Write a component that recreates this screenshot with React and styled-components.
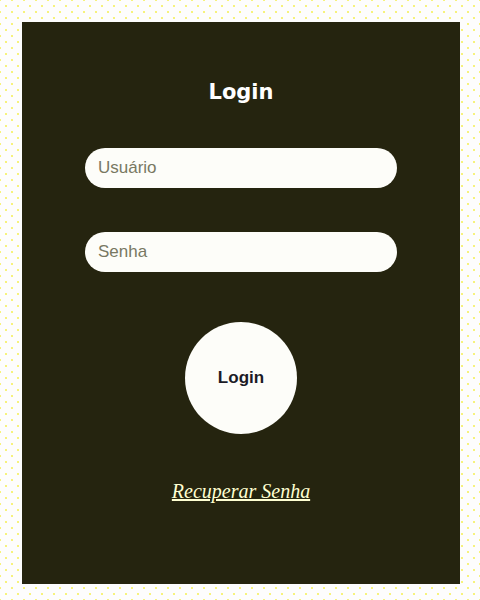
import React from 'react'
import styled, { createGlobalStyle } from 'styled-components'

const Global = createGlobalStyle`
  html, body {
    margin: 0;
    padding: 0;
  }
  body {
    background-color: #fdfdfd;
    background-image:
      radial-gradient(circle, #f6f27a 0.7px, transparent 1.1px),
      radial-gradient(circle, #f6f27a 0.7px, transparent 1.1px);
    background-size: 12px 12px;
    background-position: 0 0, 6px 6px;
    font-family: "Liberation Sans", Arial, sans-serif;
  }
`

const Page = styled.div`
  padding: 22px;
`

const Panel = styled.form`
  width: 438px;
  height: 562px;
  box-sizing: border-box;
  background: #25240f;
  display: flex;
  flex-direction: column;
  align-items: center;
  padding-top: 58px;
`

const Title = styled.h1`
  margin: 0 0 43px;
  font-family: "DejaVu Sans", Verdana, sans-serif;
  font-size: 21px;
  line-height: 25px;
  font-weight: bold;
  color: #ffffff;
`

const Field = styled.input`
  width: 312px;
  height: 40px;
  box-sizing: border-box;
  border: none;
  border-radius: 20px;
  background: #fdfdf9;
  padding: 0 13px;
  font-family: "Liberation Sans", Arial, sans-serif;
  font-size: 17px;
  color: #333;
  margin-bottom: ${p => p.$gap}px;
  outline: none;
  &::placeholder {
    color: #787862;
  }
`

const RoundButton = styled.button`
  width: 112px;
  height: 112px;
  border-radius: 50%;
  border: none;
  background: #fdfdf9;
  font-family: "Liberation Sans", Arial, sans-serif;
  font-size: 17px;
  font-weight: bold;
  color: #1b1b26;
  cursor: pointer;
  margin-bottom: 46px;
`

const Link = styled.a`
  font-family: "Liberation Serif", "Times New Roman", serif;
  font-style: italic;
  font-size: 20px;
  line-height: 23px;
  color: #ffffd2;
  text-decoration: underline;
`

export default function App() {
  return (
    <Page>
      <Global />
      <Panel onSubmit={e => e.preventDefault()}>
        <Title>Login</Title>
        <Field $gap={44} placeholder="Usuário" />
        <Field $gap={50} type="password" placeholder="Senha" />
        <RoundButton type="submit">Login</RoundButton>
        <Link href="#">Recuperar Senha</Link>
      </Panel>
    </Page>
  )
}
